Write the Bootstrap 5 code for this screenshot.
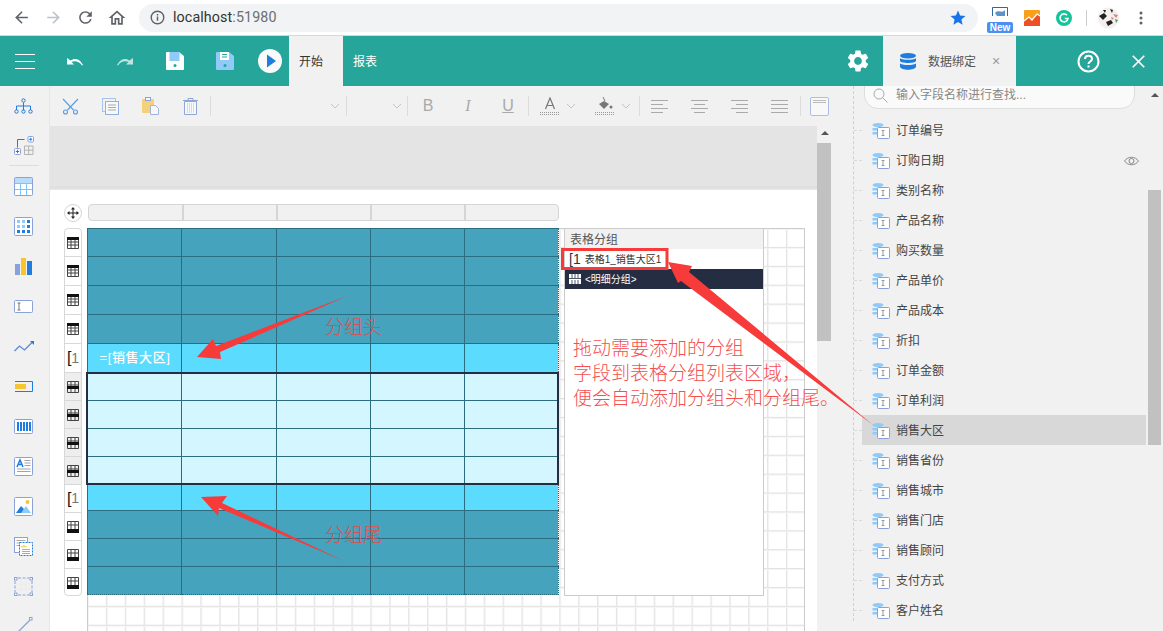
<!DOCTYPE html>
<html lang="zh-CN">
<head>
<meta charset="utf-8">
<title>报表设计器</title>
<link href="https://cdn.jsdelivr.net/npm/bootstrap@5.3.0/dist/css/bootstrap.min.css" rel="stylesheet">
<style>
html,body{height:631px;overflow:hidden}
body{font-family:"Liberation Sans","Noto Sans CJK SC",sans-serif;font-size:12px;color:#333;background:#f1f1f1;position:relative}
svg{display:block;flex:none}
.browser-bar{height:36px;background:#fff;border-bottom:1px solid #d5d8db}
.nav-slot{width:32px;height:35px}
.nav-lead{width:5px}
.addr-pill{width:839px;height:28px;margin-left:6px;background:#f1f3f4;border-radius:14px;padding:0 11px;font-size:14px;color:#333}
.addr-url{margin-left:8px;font-family:Roboto,"Liberation Sans",sans-serif;font-size:14.3px;letter-spacing:.1px}
.addr-url span{color:#6b6f73}
.ext-slot{width:32px;height:35px}
.ext-first{margin-left:6px}
.ext-new{position:absolute;left:0;right:0;bottom:-2px;background:#4d8ef0;color:#fff;font:bold 10px/11px "Liberation Sans",sans-serif;text-align:center;border-radius:2px}
.ext-box{width:26px;height:24px;position:relative;top:1px}
.ext-sep{width:1px;height:16px;background:#ccc;margin:0 10px 0 6px}
.menu-dots{margin-right:20px}
.app-head{height:50px;background:#26a69a;color:#fff}
.head-slot{width:50px;height:50px}
.head-play{width:39px;height:50px}
.head-tab{height:50px;padding:2px 10px 0;width:54px;background:#f1f1f1;color:#333}
.head-link{padding:2px 0 0 10px;color:#fff}
.bind-tab{width:133px;height:50px;background:#f1f1f1;color:#555;margin:0 61px 0 12px;padding-left:17px}
.bind-tab .bind-x{margin-left:16px;color:#999;font-size:14px}
.bind-label{margin-left:12px;padding-top:2px}
.close-slot{width:23px;margin-right:18px}
.help-slot{width:45px}
.main-row{height:545px}
.side-rail{width:50px;border-right:1px solid #e6e6e6;background:#f1f1f1}
.rail-slot{height:40px;width:47px}
.rail-sep{height:0;border-top:1px solid #ddd;margin:-1px 9px 0 9px;width:30px}
.center-col{width:782px}
.tool-row{height:40px;background:#f1f1f1}
.tool-slot{width:40px;height:40px;color:#aaa;font-size:16px}
.tool-sep{width:1px;height:20px;background:#dcdcdc;flex:none}
.sel-a{width:135px;height:40px;padding-right:6px}
.sel-b{width:60px;height:40px;padding-right:5px}
.tool-color{width:55px;height:40px;padding-right:8px;gap:6px}
.tool-page{width:31px;height:40px;padding-right:3px}
.tb-b{font-family:"Liberation Sans",sans-serif;font-weight:400}
.tb-i{font-family:"Liberation Serif",serif;font-style:italic}
.tb-u{text-decoration:underline}
.stage-wrap{height:505px}
.stage-col{width:767px;background:#fff}
.band{height:64px;background:linear-gradient(#e4e4e4 0,#e4e4e4 92%,#dedede 97%,#ececec 100%)}
.canvas-zone{padding:14px 0 0 13px;height:441px}
.ruler-row{height:18px;margin-bottom:6px}
.move-handle{width:18px;height:18px;border:1px solid #d5d5d5;border-radius:50%;background:#fff;margin-left:1px}
.ruler{width:471px;height:17px;margin-left:6px;border:1px solid #d5d5d5;border-radius:4px;background:#f1f1f1}
.ruler i{flex:1 1 0;border-left:2px solid #d5d5d5}
.ruler i:first-child{border-left:0;flex:0 0 93px}
.handles{width:18px;margin-left:1px;margin-right:5px;border:1px solid #d8d8d8;border-radius:4px;background:#fff;height:368px;overflow:hidden}
.hcell{height:28px;border-bottom:1px solid #d8d8d8;font-size:14px;color:#777}
.hcell:last-child{border-bottom:0}
.hcell.tall{height:29px}
.hcell.grayed{background:#eee}
.hcell b{font-weight:400;color:#111;font-size:16px;line-height:16px}
.surface{width:718px;height:420px;background-color:#fff;background-image:linear-gradient(#e2e2e2 1px,#f4f4f4 1px,#f4f4f4 2px,transparent 2px),linear-gradient(90deg,#e4e4e4 1px,#f4f4f4 1px,#f4f4f4 2px,transparent 2px);background-size:18.9px 18.9px;box-shadow:inset 1px 0 #ccc,inset -1px 0 #ccc,inset 0 1px #ccc}
.rpt{border-collapse:collapse;table-layout:fixed;width:473px;flex:none;align-self:flex-start;margin:0 0 0 -1px}
.rpt td{border:1px solid #2a6d80;height:28px;padding:0}
.rpt tr:first-child td:nth-child(1){width:94px}
.rpt tr:first-child td:nth-child(2){width:95px}
.rpt tr:first-child td:nth-child(3){width:94px}
.rpt tr:first-child td:nth-child(4){width:94px}
.rpt tr:first-child td:nth-child(5){width:94px}
.rpt .r29 td{height:29px}
.rpt .r27 td{height:27px}
.rpt .hd td,.rpt .ft td{background:#45a3bd}
.rpt .grp td{background:#5bdcff}
.rpt .dt td{background:#d4f6ff}
.rpt .dt td:first-child{border-left:2px solid #252d42}
.rpt .dt td:last-child{border-right:2px solid #252d42}
.rpt .dt-a td{border-top:2px solid #252d42}
.rpt .dt-z td{border-bottom:2px solid #252d42}
.rpt tr:not(.dt) td:last-child{border-right:1px dotted #2a6d80}
.rpt tr:last-child td{border-bottom:1px dotted #2a6d80}
.rpt .cell-text{color:#fff;font-size:13px;font-weight:500;padding-left:12px;white-space:nowrap;letter-spacing:.6px}
.group-panel{width:200px;height:368px;margin-left:5px;background:#fff;border:1px solid #ccc;flex:none;align-self:flex-start}
.gp-title{height:20px;background:#f1f1f1;padding-left:5px;line-height:22px;color:#555}
.gp-row{height:20px;padding-left:4px;font-size:10px;color:#333;white-space:nowrap}
.gp-row b{font-weight:400;font-size:14px;color:#333;margin-right:4px}
.gp-dark{background:#252d42;color:#fff;gap:4px}
.vscroll{width:15px;background:#f1f1f1}
.scroll-up{width:0;height:0;border-left:4px solid transparent;border-right:4px solid transparent;border-bottom:4px solid #555}
.vs-arrow{height:17px;padding-top:5px}
.vs-thumb{width:14px;height:198px;background:#c1c1c1}
.side-panel{width:331px;background:#f1f1f1}
.tree{width:316px;padding-left:21px}
.tree-inner{border-left:1px dashed #d0d0d0;height:545px}
.search-box{width:271px;height:33px;margin:-10px 0 6px 10px;border:1px solid #ddd;border-radius:0 0 14px 14px/0 0 14px 14px;background:#fafafa;padding:5px 0 0 8px;color:#888}
.search-box span{margin-left:8px}
.tree-row{height:30px}
.tree-tick{width:8px;border-top:1px dashed #d8d8d8;flex:none}
.tree-item{width:284px;height:30px;padding:2px 0 0 10px;color:#444}
.tree-item.active{background:#d8d8d8}
.tree-item svg.ti{margin-right:6px}
.eye-icon{margin-left:auto;margin-right:7px}
.panel-scroll{width:13px;padding-top:7px}
.panel-thumb{width:13px;height:255px;background:#c1c1c1;margin-top:93px}
.annot{position:absolute;left:0;top:0;width:1163px;height:631px;pointer-events:none}
.note{position:absolute;color:#f54f4f;font-size:19px;line-height:25px;white-space:nowrap;font-weight:300}
.note-a{left:325px;top:315px;color:#d9504f}
.note-b{left:325px;top:523px;color:#d9504f}
.note-c{left:573px;top:336px}
</style>
</head>
<body class="d-flex flex-column">
<svg width="0" height="0" class="position-absolute">
<defs>
<symbol id="r-top" viewBox="0 0 12 12"><path d="M.5.5h11v11H.5zM.5 5h11M.5 8h11M4 3v8.500M8 3v8.500" fill="none" stroke="#444"/><rect width="12" height="3" fill="#111"/></symbol>
<symbol id="r-mid" viewBox="0 0 12 12"><path d="M.5.5h11v11H.5zM.5 4h11M4 .5v11M8 .5v11" fill="none" stroke="#444"/><rect y="5" width="12" height="3" fill="#111"/></symbol>
<symbol id="r-bot" viewBox="0 0 12 12"><path d="M.5.5h11v11H.5zM.5 4h11M4 .5v8M8 .5v8" fill="none" stroke="#444"/><rect y="8" width="12" height="4" fill="#111"/></symbol>
<symbol id="fld" viewBox="0 0 18 16"><ellipse cx="6" cy="2" rx="5.500" ry="2" fill="#90caf9"/><path d="M.5 5h5v2.500h-5zM.5 9h5v2.500h-5z" fill="#90caf9"/><rect x="5.500" y="4.500" width="12" height="11" rx="1" fill="#fff" stroke="#8aa2d8"/><path d="M9.500 7.500h3M9.500 12.500h3M11 7.500v5" stroke="#999" fill="none"/></symbol>
<symbol id="al-l" viewBox="0 0 18 14"><path d="M0 1.500h17M0 5.500h12M0 9.500h17M0 13.500h12" stroke="#aaa"/></symbol>
<symbol id="al-c" viewBox="0 0 18 14"><path d="M0 1.500h17M3 5.500h11M0 9.500h17M3 13.500h11" stroke="#aaa"/></symbol>
<symbol id="al-r" viewBox="0 0 18 14"><path d="M0 1.500h17M5 5.500h12M0 9.500h17M5 13.500h12" stroke="#aaa"/></symbol>
<symbol id="al-j" viewBox="0 0 18 14"><path d="M0 1.500h17M0 5.500h17M0 9.500h17M0 13.500h17" stroke="#aaa"/></symbol>
<symbol id="chev" viewBox="0 0 10 6"><path d="M1 1l4 4 4-4" fill="none" stroke="#c4c4c4"/></symbol>
</defs>
</svg>

<!-- browser chrome -->
<div class="browser-bar d-flex align-items-center flex-none">
  <div class="nav-lead"></div>
  <div class="nav-slot d-flex align-items-center justify-content-center"><svg width="19" height="19" viewBox="0 0 24 24"><path fill="#5f6368" d="M20 11H7.830l5.590-5.590L12 4l-8 8 8 8 1.410-1.410L7.830 13H20v-2z"/></svg></div>
  <div class="nav-slot d-flex align-items-center justify-content-center"><svg width="19" height="19" viewBox="0 0 24 24"><path fill="#bdc1c6" d="M4 11h12.170l-5.590-5.590L12 4l8 8-8 8-1.410-1.410L16.170 13H4v-2z"/></svg></div>
  <div class="nav-slot d-flex align-items-center justify-content-center"><svg width="19" height="19" viewBox="0 0 24 24"><path fill="#5f6368" d="M17.650 6.350A7.958 7.958 0 0 0 12 4c-4.420 0-7.990 3.580-7.990 8s3.570 8 7.990 8c3.730 0 6.840-2.550 7.730-6h-2.080A5.990 5.990 0 0 1 12 18c-3.310 0-6-2.690-6-6s2.690-6 6-6c1.660 0 3.140.690 4.220 1.780L13 11h7V4l-2.350 2.350z"/></svg></div>
  <div class="nav-slot d-flex align-items-center justify-content-center"><svg width="20" height="20" viewBox="0 0 24 24"><path fill="#5f6368" d="M12 5.690l5 4.500V18h-2v-6H9v6H7v-7.810l5-4.500M12 3L2 12h3v8h6v-6h2v6h6v-8h3L12 3z"/></svg></div>
  <div class="addr-pill d-flex align-items-center">
    <svg width="15" height="15" viewBox="0 0 16 16"><circle cx="8" cy="8" r="6.700" fill="none" stroke="#5f6368" stroke-width="1.500"/><path d="M7.200 7h1.600v4.500H7.200zM7.200 4.300h1.600v1.600H7.200z" fill="#5f6368"/></svg>
    <div class="addr-url">localhost<span>:51980</span></div>
    <svg class="ms-auto" width="18" height="18" viewBox="0 0 24 24"><path fill="#1a73e8" d="M12 17.270L18.180 21l-1.640-7.030L22 9.240l-7.190-.610L12 2 9.190 8.630 2 9.240l5.460 4.730L5.820 21z"/></svg>
  </div>
  <div class="ext-slot ext-first d-flex align-items-center justify-content-center">
    <div class="ext-box"><svg width="16" height="10" viewBox="0 0 16 10" class="mx-auto"><path d="M.5 9V.5h15V9" fill="none" stroke="#2d6aa5"/><path d="M3 6c4-4 7 1 10-3v6H5z" fill="#5d93c9"/></svg><div class="ext-new">New</div></div>
  </div>
  <div class="ext-slot d-flex align-items-center justify-content-center"><svg width="16" height="16" viewBox="0 0 16 16"><rect width="16" height="16" rx="1" fill="#f9a01b"/><path d="M0 16V11l5-4 3 3 5-6 3 2v10z" fill="#ee4f27"/><path d="M0 11l5-4 3 3 5-6 3 2" fill="none" stroke="#fff" stroke-width="1.200"/></svg></div>
  <div class="ext-slot d-flex align-items-center justify-content-center"><svg width="16" height="16" viewBox="0 0 16 16"><circle cx="8" cy="8" r="8" fill="#15c39a"/><path d="M11 5.200A4 4 0 1 0 12 8.500H8.800" fill="none" stroke="#fff" stroke-width="1.600"/></svg></div>
  <div class="ext-sep"></div>
  <svg width="23" height="22" viewBox="0 0 23 22"><circle cx="11.500" cy="11" r="10.500" fill="#f4eeee"/><path d="M2 9l5-3 3 3-4 4zM9 15l5-2 2 3-5 3zM13 2l3 1-1 3zM6 3l3 0-1 3z" fill="#222"/><path d="M16 7l5 1-2 3zM14 10l3 1-2 2z" fill="#d8867e"/><path d="M18 12l3 1-2 3z" fill="#5a9c55"/></svg>
  <svg class="ms-auto menu-dots" width="4" height="14" viewBox="0 0 4 14"><circle cx="2" cy="2" r="1.500" fill="#5f6368"/><circle cx="2" cy="7" r="1.500" fill="#5f6368"/><circle cx="2" cy="12" r="1.500" fill="#5f6368"/></svg>
</div>

<!-- app header -->
<div class="app-head d-flex align-items-center">
  <div class="head-slot d-flex align-items-center justify-content-center"><svg width="20" height="15" viewBox="0 0 20 15"><path d="M0 .5h20M0 7.500h20M0 14.500h20" stroke="#fff"/></svg></div>
  <div class="head-slot d-flex align-items-center justify-content-center"><svg width="16" height="9" viewBox="0 0 16 9"><path d="M0 1v6.500h7L4.500 5C7 3.500 12 3.500 15 8.500L16 8C13 1.500 7 .5 3.500 3.500z" fill="#fff"/></svg></div>
  <div class="head-slot d-flex align-items-center justify-content-center"><svg width="16" height="9" viewBox="0 0 16 9"><path d="M16 1v6.500H9L11.500 5C9 3.500 4 3.500 1 8.500L0 8C3 1.500 9 .5 12.500 3.500z" fill="#bfe3df"/></svg></div>
  <div class="head-slot d-flex align-items-center justify-content-center"><svg width="18" height="18" viewBox="0 0 18 18"><path d="M0 1a1 1 0 0 1 1-1h12l5 4v13a1 1 0 0 1-1 1H1a1 1 0 0 1-1-1z" fill="#fff"/><rect x="3.500" y="0" width="10" height="9" fill="#90caf9"/><circle cx="9" cy="13.500" r="1.500" fill="#26a69a"/></svg></div>
  <div class="head-slot d-flex align-items-center justify-content-center"><svg width="18" height="18" viewBox="0 0 18 18"><path d="M0 1a1 1 0 0 1 1-1h12l5 4v13a1 1 0 0 1-1 1H1a1 1 0 0 1-1-1z" fill="#90caf9"/><rect x="4" y="0" width="9" height="8" fill="#fff"/><path d="M6 2.500h5M6 5h5" stroke="#26a69a"/><circle cx="9" cy="13.500" r="1.500" fill="#26a69a"/></svg></div>
  <div class="head-play d-flex align-items-center justify-content-center"><svg width="24" height="24" viewBox="0 0 24 24"><circle cx="12" cy="12" r="12" fill="#fafafa"/><path d="M9 5.500l9 6.500-9 6.500z" fill="#1e7ddf"/></svg></div>
  <div class="head-tab d-flex align-items-center">开始</div>
  <div class="head-link">报表</div>
  <div class="ms-auto d-flex align-items-center">
    <svg width="26" height="26" viewBox="0 0 24 24"><path fill="#fff" d="M19.140 12.940c.040-.300.060-.610.060-.940 0-.320-.020-.640-.070-.940l2.030-1.580a.490.490 0 0 0 .120-.610l-1.920-3.320a.488.488 0 0 0-.590-.220l-2.390.960c-.500-.380-1.030-.700-1.620-.940l-.360-2.540a.484.484 0 0 0-.480-.410h-3.840c-.240 0-.430.170-.470.410l-.360 2.540c-.590.240-1.130.570-1.620.940l-2.390-.960a.480.480 0 0 0-.590.220L2.740 8.870c-.120.210-.080.470.120.610l2.030 1.580c-.050.300-.090.630-.090.940s.020.640.070.940l-2.030 1.580a.490.490 0 0 0-.120.610l1.920 3.320c.120.220.370.290.590.220l2.390-.960c.500.380 1.030.700 1.620.940l.360 2.540c.050.240.240.410.480.410h3.840c.240 0 .440-.170.470-.410l.360-2.540c.590-.240 1.130-.560 1.620-.940l2.390.960c.220.080.470 0 .590-.220l1.920-3.320c.120-.220.070-.470-.120-.610l-2.010-1.580zM12 15.600c-1.980 0-3.600-1.620-3.600-3.600s1.620-3.600 3.600-3.600 3.600 1.620 3.600 3.600-1.620 3.600-3.600 3.600z"/></svg>
    <div class="bind-tab d-flex align-items-center">
      <svg width="16" height="17" viewBox="0 0 16 17"><ellipse cx="8" cy="2.800" rx="8" ry="2.800" fill="#1e7ddf"/><path d="M0 5c1 2.400 15 2.400 16 0v3c-1 2.600-15 2.600-16 0zM0 10.200c1 2.400 15 2.400 16 0v3.600c-1 4-15 4-16 0z" fill="#1e7ddf"/></svg>
      <span class="bind-label">数据绑定</span>
      <span class="bind-x">×</span>
    </div>
    <div class="help-slot d-flex align-items-center"><svg width="23" height="23" viewBox="0 0 23 23"><circle cx="11.500" cy="11.500" r="10" fill="none" stroke="#fff" stroke-width="2"/><path d="M8 9c0-4.500 7-4.500 7 0 0 2.500-3.500 2.500-3.500 5" fill="none" stroke="#fff" stroke-width="2"/><rect x="10.500" y="15.500" width="2" height="2" fill="#fff"/></svg></div>
    <div class="close-slot d-flex justify-content-end"><svg width="13" height="13" viewBox="0 0 12 12"><path d="M.7.7l10.600 10.600M11.300.7L.7 11.300" stroke="#fff" stroke-width="1.600"/></svg></div>
  </div>
</div>

<div class="main-row d-flex">
  <!-- left rail -->
  <div class="side-rail flex-none">
    <div class="rail-slot d-flex align-items-center justify-content-center"><svg width="19" height="16" viewBox="0 0 19 16"><g fill="none" stroke="#1e7ddf"><circle cx="9.500" cy="2.500" r="1.700"/><path d="M9.500 4.500v8M2.500 12V8h14v4"/><circle cx="2.500" cy="13.500" r="1.700"/><circle cx="9.500" cy="13.500" r="1.700"/><circle cx="16.500" cy="13.500" r="1.700"/></g></svg></div>
    <div class="rail-slot d-flex align-items-center justify-content-center"><svg width="20" height="20" viewBox="0 0 20 20"><rect x="14" y=".5" width="5.500" height="5.500" rx="1" fill="#fff" stroke="#8aa2d8"/><path d="M16.750 1.800v3M15.200 3.250h3" stroke="#1e7ddf"/><rect x=".5" y="12.500" width="6" height="6" rx="1" fill="#fff" stroke="#8aa2d8"/><path d="M3.500 13.800v3.400M1.800 15.500h3.400" stroke="#1e7ddf"/><path d="M3.500 11.500V3.500h7" fill="none" stroke="#1e7ddf"/><path d="M10.500 10h8.500v8.500h-8.500zM14.700 10v8.500M10.500 14.200H19" fill="none" stroke="#b3b3b3"/></svg></div>
    <div class="rail-sep"></div>
    <div class="rail-slot d-flex align-items-center justify-content-center"><svg width="19" height="19" viewBox="0 0 19 19"><rect x=".5" y=".5" width="18" height="18" rx="1" fill="#fff" stroke="#8aa2d8"/><rect x="1" y="1" width="17" height="5" fill="#b9dcfb"/><path d="M1 6.500h17M1 12.500h17M6.500 6v12M12.500 6v12" stroke="#7cc4fb"/></svg></div>
    <div class="rail-slot d-flex align-items-center justify-content-center"><svg width="19" height="19" viewBox="0 0 19 19"><rect x=".5" y=".5" width="18" height="18" rx="1" fill="#fff" stroke="#8aa2d8"/><g fill="#90caf9"><rect x="3" y="3" width="3" height="3"/><rect x="8" y="3" width="3" height="3"/><rect x="3" y="8" width="3" height="3"/><rect x="8" y="8" width="3" height="3"/></g><g fill="#1e7ddf"><rect x="13" y="3" width="3" height="3"/><rect x="13" y="8" width="3" height="3"/><rect x="3" y="13" width="3" height="3"/><rect x="8" y="13" width="3" height="3"/><rect x="13" y="13" width="3" height="3"/></g></svg></div>
    <div class="rail-slot d-flex align-items-center justify-content-center"><svg width="18" height="17" viewBox="0 0 18 17"><rect y="6" width="5" height="11" fill="#8aa2d8"/><rect x="6" y="0" width="5" height="17" fill="#f7c52f"/><rect x="12" y="3" width="5" height="14" fill="#1e7ddf"/></svg></div>
    <div class="rail-slot d-flex align-items-center justify-content-center"><svg width="19" height="13" viewBox="0 0 19 13"><rect x=".5" y=".5" width="18" height="12" rx="1" fill="#fff" stroke="#8aa2d8"/><path d="M3.500 3h3M3.500 10h3M5 3v7" stroke="#777" fill="none"/></svg></div>
    <div class="rail-slot d-flex align-items-center justify-content-center"><svg width="20" height="12" viewBox="0 0 20 12"><path d="M.5 11l5-5 5 4 8-8" fill="none" stroke="#5b88d8" stroke-width="1.300"/><path d="M16 1h4v4z" fill="#1e7ddf"/></svg></div>
    <div class="rail-slot d-flex align-items-center justify-content-center"><svg width="18" height="11" viewBox="0 0 18 11"><path d="M0 .5h17.500v10H0" fill="none" stroke="#1e7ddf"/><rect y="3" width="11" height="5" fill="#f7c52f"/></svg></div>
    <div class="rail-slot d-flex align-items-center justify-content-center"><svg width="19" height="15" viewBox="0 0 19 15"><rect x=".5" y=".5" width="18" height="14" rx="1" fill="#fff" stroke="#8aa2d8"/><path d="M3 3h2v9H3zM6 3h2v9H6zM9 3h2v9H9zM12 3h2v9h-2zM15 3h2v9h-2z" fill="#1e7ddf"/></svg></div>
    <div class="rail-slot d-flex align-items-center justify-content-center"><svg width="19" height="19" viewBox="0 0 19 19"><rect x=".5" y=".5" width="18" height="18" rx="1" fill="#fff" stroke="#8aa2d8"/><path d="M3 10l3-7 3 7M4 7.500h4" fill="none" stroke="#1e7ddf" stroke-width="1.500"/><path d="M10.500 3.500h6M10.500 6h6M10.500 8.500h6M3 12h13.500M3 14.500h13.500" stroke="#a3a3a3"/></svg></div>
    <div class="rail-slot d-flex align-items-center justify-content-center"><svg width="19" height="19" viewBox="0 0 19 19"><rect x=".5" y=".5" width="18" height="18" rx="1" fill="#fff" stroke="#8aa2d8"/><circle cx="13.500" cy="5" r="2" fill="#f7c52f"/><path d="M2 16l5-7 3 3-2 4z" fill="#1e7ddf"/><path d="M7 16l5-7 5 7z" fill="#90caf9"/></svg></div>
    <div class="rail-slot d-flex align-items-center justify-content-center"><svg width="19" height="19" viewBox="0 0 19 19"><rect x=".5" y=".5" width="13" height="15" fill="#fff" stroke="#8aa2d8"/><path d="M2.500 3.500h9M2.500 6h4M2.500 8.500h4" stroke="#aaa"/><rect x="5.500" y="5.500" width="13" height="13" fill="#fff" stroke="#1e7ddf" stroke-dasharray="2 1"/><path d="M8 10.500V9M10 10.500V8M12 10.500V9" stroke="#f7c52f" stroke-width="1.300"/><path d="M8 12.500h8M8 14.500h8M8 16.500h8" stroke="#aaa"/></svg></div>
    <div class="rail-slot d-flex align-items-center justify-content-center"><svg width="19" height="19" viewBox="0 0 19 19"><path d="M4 1h11M4 18h11M1 4v11M18 4v11" stroke="#8aa2d8" stroke-dasharray="3 1.500" fill="none"/><path d="M2 7h15M2 12h15M7 2v15M12 2v15" stroke="#ebebeb"/><g fill="#fff" stroke="#8aa2d8"><rect x=".5" y=".5" width="2.500" height="2.500"/><rect x="16" y=".5" width="2.500" height="2.500"/><rect x=".5" y="16" width="2.500" height="2.500"/><rect x="16" y="16" width="2.500" height="2.500"/></g></svg></div>
    <div class="rail-slot d-flex align-items-center justify-content-center"><svg width="19" height="19" viewBox="0 0 19 19"><path d="M1 18L16 3" stroke="#8aa2d8" stroke-width="1.300"/><rect x="15.500" y=".5" width="2.500" height="2.500" fill="#fff" stroke="#8aa2d8"/></svg></div>
  </div>

  <!-- centre -->
  <div class="center-col d-flex flex-column flex-none">
    <div class="tool-row d-flex align-items-center">
      <div class="tool-slot d-flex align-items-center justify-content-center"><svg width="17" height="17" viewBox="0 0 17 17"><g fill="none" stroke="#5b9be0" stroke-width="1.100"><path d="M1 1l10.500 11M16 1L5.500 12"/><circle cx="3.500" cy="14" r="2"/><circle cx="13.500" cy="14" r="2"/></g></svg></div>
      <div class="tool-slot d-flex align-items-center justify-content-center"><svg width="17" height="17" viewBox="0 0 17 17"><rect x=".5" y=".5" width="13" height="13" fill="none" stroke="#a7c4ec"/><rect x="3.500" y="3.500" width="13" height="13" fill="#f8f8f8" stroke="#8fb2e2"/><path d="M6 7h8M6 9.500h8M6 12h8" stroke="#aaa"/></svg></div>
      <div class="tool-slot d-flex align-items-center justify-content-center"><svg width="17" height="18" viewBox="0 0 17 18"><rect x="0" y="2" width="12" height="14" rx="1" fill="#f5d27a"/><rect x="3.500" y=".5" width="5" height="3" fill="#f8f8f8" stroke="#8aa2d8"/><path d="M8.500 8.500h5l3 3v6h-8z" fill="#f8f8f8" stroke="#a3b5de"/></svg></div>
      <div class="tool-slot d-flex align-items-center justify-content-center"><svg width="15" height="17" viewBox="0 0 15 17"><path d="M1.500 3.500h12V16.500h-12z" fill="#f8f8f8" stroke="#8fa6d8"/><path d="M0 2.500h15M5 2V.5h5V2" stroke="#8fa6d8" fill="none"/><path d="M4 6h7M4 8h7M4 10h7M4 12h7M4 14h7" stroke="#bbb" stroke-dasharray="1 1"/></svg></div>
      <div class="tool-sep"></div>
      <div class="sel-a d-flex align-items-center justify-content-end"><svg width="10" height="6"><use href="#chev"/></svg></div>
      <div class="tool-sep"></div>
      <div class="sel-b d-flex align-items-center justify-content-end"><svg width="10" height="6"><use href="#chev"/></svg></div>
      <div class="tool-sep"></div>
      <div class="tool-slot tb-b d-flex align-items-center justify-content-center">B</div>
      <div class="tool-slot tb-i d-flex align-items-center justify-content-center">I</div>
      <div class="tool-slot tb-u d-flex align-items-center justify-content-center">U</div>
      <div class="tool-sep"></div>
      <div class="tool-color d-flex align-items-center justify-content-end">
        <svg width="20" height="19" viewBox="0 0 20 19"><path d="M5.500 12L10 1l4.500 11M7 8.500h6" fill="none" stroke="#777" stroke-width="1.200"/><path d="M0 15.500h20M0 17.500h20" stroke="#999" stroke-dasharray="1 1"/></svg>
        <svg width="10" height="6"><use href="#chev"/></svg>
      </div>
      <div class="tool-color d-flex align-items-center justify-content-end">
        <svg width="20" height="19" viewBox="0 0 20 19"><path d="M4 7l5-3 5 3-5 5z" fill="#777"/><path d="M8 0l2 4" stroke="#777"/><circle cx="16" cy="10" r="1.500" fill="#777"/><path d="M0 15.500h20M0 17.500h20" stroke="#999" stroke-dasharray="1 1"/></svg>
        <svg width="10" height="6"><use href="#chev"/></svg>
      </div>
      <div class="tool-sep"></div>
      <div class="tool-slot d-flex align-items-center justify-content-center"><svg width="18" height="14"><use href="#al-l"/></svg></div>
      <div class="tool-slot d-flex align-items-center justify-content-center"><svg width="18" height="14"><use href="#al-c"/></svg></div>
      <div class="tool-slot d-flex align-items-center justify-content-center"><svg width="18" height="14"><use href="#al-r"/></svg></div>
      <div class="tool-slot d-flex align-items-center justify-content-center"><svg width="18" height="14"><use href="#al-j"/></svg></div>
      <div class="tool-sep"></div>
      <div class="tool-page d-flex align-items-center justify-content-end"><svg width="19" height="19" viewBox="0 0 19 19"><rect x=".5" y=".5" width="18" height="18" rx="1.500" fill="#f8f8f8" stroke="#aebde2"/><path d="M3 3.500h13M3 5.500h13" stroke="#bbb"/></svg></div>
    </div>
    <div class="stage-wrap d-flex">
      <div class="stage-col">
        <div class="band"></div>
        <div class="canvas-zone">
          <div class="ruler-row d-flex">
            <div class="move-handle d-flex align-items-center justify-content-center"><svg width="12" height="12" viewBox="0 0 12 12"><path d="M6 0l2 2.500H4zM6 12l2-2.500H4zM0 6l2.500 2V4zM12 6L9.500 8V4z" fill="#222"/><path d="M6 2v8M2 6h8" stroke="#222"/></svg></div>
            <div class="ruler d-flex"><i></i><i></i><i></i><i></i><i></i></div>
          </div>
          <div class="d-flex align-items-start">
            <div class="handles">
              <div class="hcell d-flex align-items-center justify-content-center"><svg width="12" height="12"><use href="#r-top"/></svg></div>
              <div class="hcell tall d-flex align-items-center justify-content-center"><svg width="12" height="12"><use href="#r-top"/></svg></div>
              <div class="hcell tall d-flex align-items-center justify-content-center"><svg width="12" height="12"><use href="#r-top"/></svg></div>
              <div class="hcell tall d-flex align-items-center justify-content-center"><svg width="12" height="12"><use href="#r-top"/></svg></div>
              <div class="hcell tall d-flex align-items-center justify-content-center"><b>[</b>1</div>
              <div class="hcell grayed d-flex align-items-center justify-content-center"><svg width="12" height="12"><use href="#r-mid"/></svg></div>
              <div class="hcell grayed d-flex align-items-center justify-content-center"><svg width="12" height="12"><use href="#r-mid"/></svg></div>
              <div class="hcell grayed d-flex align-items-center justify-content-center"><svg width="12" height="12"><use href="#r-mid"/></svg></div>
              <div class="hcell grayed d-flex align-items-center justify-content-center"><svg width="12" height="12"><use href="#r-mid"/></svg></div>
              <div class="hcell d-flex align-items-center justify-content-center"><b>[</b>1</div>
              <div class="hcell d-flex align-items-center justify-content-center"><svg width="12" height="12"><use href="#r-bot"/></svg></div>
              <div class="hcell d-flex align-items-center justify-content-center"><svg width="12" height="12"><use href="#r-bot"/></svg></div>
              <div class="hcell d-flex align-items-center justify-content-center"><svg width="12" height="12"><use href="#r-bot"/></svg></div>
            </div>
            <div class="surface d-flex">
              <table class="rpt">
                <tr class="hd"><td></td><td></td><td></td><td></td><td></td></tr>
                <tr class="hd r29"><td></td><td></td><td></td><td></td><td></td></tr>
                <tr class="hd r29"><td></td><td></td><td></td><td></td><td></td></tr>
                <tr class="hd r29"><td></td><td></td><td></td><td></td><td></td></tr>
                <tr class="grp r29"><td class="cell-text">=[销售大区]</td><td></td><td></td><td></td><td></td></tr>
                <tr class="dt dt-a"><td></td><td></td><td></td><td></td><td></td></tr>
                <tr class="dt"><td></td><td></td><td></td><td></td><td></td></tr>
                <tr class="dt"><td></td><td></td><td></td><td></td><td></td></tr>
                <tr class="dt dt-z r27"><td></td><td></td><td></td><td></td><td></td></tr>
                <tr class="grp r27"><td></td><td></td><td></td><td></td><td></td></tr>
                <tr class="ft"><td></td><td></td><td></td><td></td><td></td></tr>
                <tr class="ft"><td></td><td></td><td></td><td></td><td></td></tr>
                <tr class="ft"><td></td><td></td><td></td><td></td><td></td></tr>
              </table>
              <div class="group-panel">
                <div class="gp-title">表格分组</div>
                <div class="gp-row d-flex align-items-center"><b>[1</b>表格1_销售大区1</div>
                <div class="gp-row gp-dark d-flex align-items-center"><svg width="12" height="10" viewBox="0 0 12 10"><path d="M0 0h12v10H0z" fill="#fff"/><path d="M3 0v4M6 0v4M9 0v4M0 4.500h12M3 6v4M6 6v4M9 6v4" stroke="#252d42" stroke-width=".8"/></svg>&lt;明细分组&gt;</div>
              </div>
            </div>
          </div>
        </div>
      </div>
      <div class="vscroll flex-none">
        <div class="vs-arrow d-flex justify-content-center"><div class="scroll-up"></div></div>
        <div class="vs-thumb"></div>
      </div>
    </div>
  </div>

  <!-- right panel -->
  <div class="side-panel d-flex flex-none overflow-hidden">
    <div class="tree">
      <div class="tree-inner">
        <div class="search-box d-flex align-items-center">
          <svg width="15" height="15" viewBox="0 0 15 15"><circle cx="6" cy="6" r="5" fill="none" stroke="#aaa"/><path d="M9.500 9.500l5 5" stroke="#aaa"/></svg>
          <span>输入字段名称进行查找...</span>
        </div>
        <div class="tree-row d-flex align-items-center"><div class="tree-tick"></div><div class="tree-item d-flex align-items-center"><svg class="ti" width="18" height="16"><use href="#fld"/></svg>订单编号</div></div>
        <div class="tree-row d-flex align-items-center"><div class="tree-tick"></div><div class="tree-item d-flex align-items-center"><svg class="ti" width="18" height="16"><use href="#fld"/></svg>订购日期<svg class="eye-icon" width="15" height="10" viewBox="0 0 15 10"><path d="M.5 5C4 0 11 0 14.500 5 11 10 4 10 .5 5z" fill="none" stroke="#888"/><circle cx="7.500" cy="5" r="2.500" fill="none" stroke="#888"/></svg></div></div>
        <div class="tree-row d-flex align-items-center"><div class="tree-tick"></div><div class="tree-item d-flex align-items-center"><svg class="ti" width="18" height="16"><use href="#fld"/></svg>类别名称</div></div>
        <div class="tree-row d-flex align-items-center"><div class="tree-tick"></div><div class="tree-item d-flex align-items-center"><svg class="ti" width="18" height="16"><use href="#fld"/></svg>产品名称</div></div>
        <div class="tree-row d-flex align-items-center"><div class="tree-tick"></div><div class="tree-item d-flex align-items-center"><svg class="ti" width="18" height="16"><use href="#fld"/></svg>购买数量</div></div>
        <div class="tree-row d-flex align-items-center"><div class="tree-tick"></div><div class="tree-item d-flex align-items-center"><svg class="ti" width="18" height="16"><use href="#fld"/></svg>产品单价</div></div>
        <div class="tree-row d-flex align-items-center"><div class="tree-tick"></div><div class="tree-item d-flex align-items-center"><svg class="ti" width="18" height="16"><use href="#fld"/></svg>产品成本</div></div>
        <div class="tree-row d-flex align-items-center"><div class="tree-tick"></div><div class="tree-item d-flex align-items-center"><svg class="ti" width="18" height="16"><use href="#fld"/></svg>折扣</div></div>
        <div class="tree-row d-flex align-items-center"><div class="tree-tick"></div><div class="tree-item d-flex align-items-center"><svg class="ti" width="18" height="16"><use href="#fld"/></svg>订单金额</div></div>
        <div class="tree-row d-flex align-items-center"><div class="tree-tick"></div><div class="tree-item d-flex align-items-center"><svg class="ti" width="18" height="16"><use href="#fld"/></svg>订单利润</div></div>
        <div class="tree-row d-flex align-items-center"><div class="tree-tick"></div><div class="tree-item active d-flex align-items-center"><svg class="ti" width="18" height="16"><use href="#fld"/></svg>销售大区</div></div>
        <div class="tree-row d-flex align-items-center"><div class="tree-tick"></div><div class="tree-item d-flex align-items-center"><svg class="ti" width="18" height="16"><use href="#fld"/></svg>销售省份</div></div>
        <div class="tree-row d-flex align-items-center"><div class="tree-tick"></div><div class="tree-item d-flex align-items-center"><svg class="ti" width="18" height="16"><use href="#fld"/></svg>销售城市</div></div>
        <div class="tree-row d-flex align-items-center"><div class="tree-tick"></div><div class="tree-item d-flex align-items-center"><svg class="ti" width="18" height="16"><use href="#fld"/></svg>销售门店</div></div>
        <div class="tree-row d-flex align-items-center"><div class="tree-tick"></div><div class="tree-item d-flex align-items-center"><svg class="ti" width="18" height="16"><use href="#fld"/></svg>销售顾问</div></div>
        <div class="tree-row d-flex align-items-center"><div class="tree-tick"></div><div class="tree-item d-flex align-items-center"><svg class="ti" width="18" height="16"><use href="#fld"/></svg>支付方式</div></div>
        <div class="tree-row d-flex align-items-center"><div class="tree-tick"></div><div class="tree-item d-flex align-items-center"><svg class="ti" width="18" height="16"><use href="#fld"/></svg>客户姓名</div></div>
      </div>
    </div>
    <div class="panel-scroll flex-none">
      <div class="scroll-up mx-auto"></div>
      <div class="panel-thumb"></div>
    </div>
  </div>
</div>

<!-- annotations drawn over the screenshot -->
<div class="annot">
  <svg width="1163" height="631" viewBox="0 0 1163 631">
    <rect x="562.500" y="249.500" width="104.500" height="19" fill="none" stroke="#f73b3b" stroke-width="3"/>
    <path d="M197 357L213 339 216 346 347 296 220 352 221 359z" fill="#f73b3b"/>
    <path d="M201 497L227 496 222 503 344 561 219 508 218 516z" fill="#f73b3b"/>
    <path d="M668 262L692 266 689 272 873 425 681 281 678 283z" fill="#f73b3b"/>
  </svg>
  <div class="note note-a">分组头</div>
  <div class="note note-b">分组尾</div>
  <div class="note note-c">拖动需要添加的分组<br>字段到表格分组列表区域，<br>便会自动添加分组头和分组尾。</div>
</div>
<script src="https://cdn.jsdelivr.net/npm/bootstrap@5.3.0/dist/js/bootstrap.bundle.min.js"></script>
</body>
</html>
